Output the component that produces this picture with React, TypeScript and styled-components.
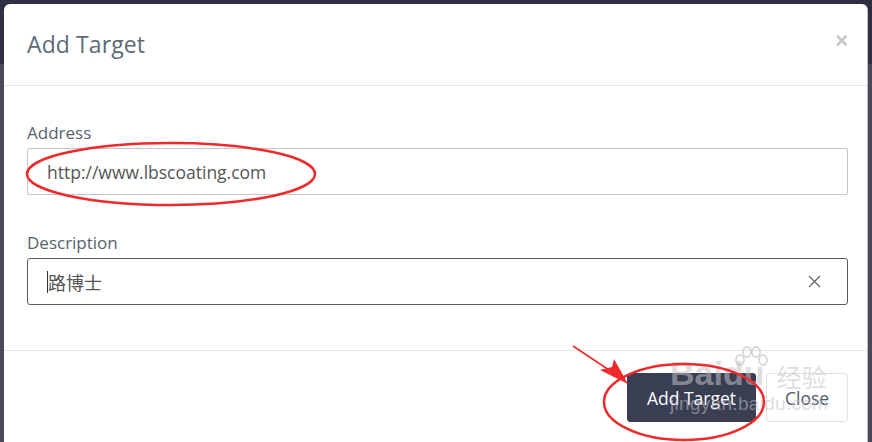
import React from "react";
import styled, { createGlobalStyle } from "styled-components";

const GlobalStyle = createGlobalStyle`
	html, body {
		margin: 0;
		padding: 0;
	}
	body {
		font-family: "Open Sans", "Noto Sans", "Noto Sans CJK SC", sans-serif;
		background: #2f3142;
	}
`;

const Backdrop = styled.div`
	position: relative;
	width: 872px;
	height: 442px;
	overflow: hidden;
	box-sizing: border-box;
	padding: 4px 4px 0 4px;
	background: linear-gradient(to bottom, #2e3041 0, #2e3041 64px, #494b5a 64px, #494b5a 100%);
`;

const Modal = styled.div`
	background: #fff;
	border-radius: 6px 6px 0 0;
	border-right: 1px solid #bfc0c6;
	height: 460px;
	display: flex;
	flex-direction: column;
`;

const Header = styled.div`
	height: 81px;
	flex-shrink: 0;
	display: flex;
	align-items: center;
	justify-content: space-between;
	padding: 0 19px 0 23px;
	border-bottom: 1px solid #e5e5e5;
`;

const Title = styled.h4`
	margin: 0;
	margin-top: -2px;
	font-size: 23px;
	font-weight: 400;
	color: #5c6b76;
	letter-spacing: 0.1px;
`;

const CloseX = styled.span`
	font-size: 22px;
	font-weight: 700;
	color: #c6c6c6;
	line-height: 1;
	margin-top: -8px;
	font-family: "Liberation Sans", sans-serif;
`;

const Body = styled.div`
	padding: 36px 19px 45px 23px;
	border-bottom: 1px solid #e5e5e5;
	display: flex;
	flex-direction: column;
	gap: 37px;
`;

const Group = styled.div`
	display: flex;
	flex-direction: column;
	gap: 4px;
`;

const Label = styled.label`
	font-size: 17px;
	line-height: 22px;
	color: #56636d;
`;

const Field = styled.div<{ $focused?: boolean }>`
	height: 47px;
	box-sizing: border-box;
	border: 1px solid ${(p) => (p.$focused ? "#5b5b5b" : "#cbc4c4")};
	border-radius: ${(p) => (p.$focused ? "3px" : "2px")};
	display: flex;
	align-items: center;
	padding: 0 26px 0 19px;
	font-size: 17.5px;
	color: #555;
`;

const Value = styled.span`
	flex: 1;
	display: flex;
	align-items: center;
`;

const Caret = styled.span`
	display: inline-block;
	width: 1px;
	height: 22px;
	background: #333;
`;

const Cjk = styled.span`
	font-family: "Noto Sans CJK SC", sans-serif;
	font-size: 18px;
	color: #555;
`;

const Footer = styled.div`
	display: flex;
	justify-content: flex-end;
	gap: 10px;
	padding: 22px 19px 0 23px;
`;

const Button = styled.button<{ $primary?: boolean }>`
	height: 49px;
	box-sizing: border-box;
	padding: 0 18px;
	font-family: "Open Sans", sans-serif;
	font-size: 17.5px;
	border-radius: 3px;
	border: 1px solid ${(p) => (p.$primary ? "#393e53" : "#e2e2e2")};
	background: ${(p) => (p.$primary ? "#393e53" : "#fff")};
	color: ${(p) => (p.$primary ? "#fff" : "#4f5b66")};
	width: ${(p) => (p.$primary ? "129px" : "82px")};
`;

const Overlay = styled.svg`
	position: absolute;
	left: 0;
	top: 0;
	pointer-events: none;
`;

const Watermark = styled.div`
	position: absolute;
	left: 670px;
	top: 352px;
	display: flex;
	flex-direction: column;
	color: rgba(195, 195, 202, 0.55);
	pointer-events: none;
`;

const WmTop = styled.div`
	font-family: "Liberation Sans", sans-serif;
	font-weight: 700;
	font-size: 34px;
	line-height: 42px;
	display: flex;
	align-items: flex-end;
`;

const WmCjk = styled.span`
	font-family: "Noto Sans CJK SC", sans-serif;
	font-weight: 400;
	font-size: 25px;
	line-height: 36px;
	margin-left: 12px;
`;

const WmBottom = styled.div`
	font-family: "Liberation Sans", sans-serif;
	font-size: 19px;
	line-height: 20px;
	letter-spacing: 0.3px;
`;

const ClearIcon = () => (
	<svg width="13" height="13" viewBox="0 0 13 13">
		<path d="M1 1 L12 12 M12 1 L1 12" stroke="#666" strokeWidth="1.3" fill="none" />
	</svg>
);

const Paw = () => (
	<svg width="38" height="30" viewBox="0 0 38 30" style={{ position: "absolute", left: 62, top: -6 }}>
		<g fill="none" stroke="rgba(195,195,202,0.6)" strokeWidth="2">
			<ellipse cx="8" cy="14" rx="4" ry="5" />
			<ellipse cx="15" cy="6" rx="4" ry="5" />
			<ellipse cx="24" cy="6" rx="4" ry="5" />
			<ellipse cx="31" cy="14" rx="4" ry="5" />
		</g>
	</svg>
);

export default function App() {
	return (
		<>
			<GlobalStyle />
			<Backdrop>
				<Modal>
					<Header>
						<Title>Add Target</Title>
						<CloseX>×</CloseX>
					</Header>
					<Body>
						<Group>
							<Label>Address</Label>
							<Field>
								<Value>http://www.lbscoating.com</Value>
							</Field>
						</Group>
						<Group>
							<Label>Description</Label>
							<Field $focused>
								<Value>
									<Caret />
									<Cjk>路博士</Cjk>
								</Value>
								<ClearIcon />
							</Field>
						</Group>
					</Body>
					<Footer>
						<Button $primary>Add Target</Button>
						<Button>Close</Button>
					</Footer>
				</Modal>
				<Watermark>
					<Paw />
					<WmTop>
						<span>Baidu</span>
						<WmCjk>经验</WmCjk>
					</WmTop>
					<WmBottom>jingyan.baidu.com</WmBottom>
				</Watermark>
				<Overlay width="872" height="442" viewBox="0 0 872 442">
					<ellipse cx="171" cy="174" rx="144" ry="31" fill="none" stroke="#ee2a2a" strokeWidth="2.5" />
					<ellipse cx="684" cy="402" rx="80" ry="38" fill="none" stroke="#ee2a2a" strokeWidth="2.5" />
					<path d="M573 346 L612 372" stroke="#ee2a2a" strokeWidth="1.6" fill="none" />
					<path d="M628 384 L600 370 L612 367 L614 359 Z" fill="#ee2a2a" />
				</Overlay>
			</Backdrop>
		</>
	);
}
